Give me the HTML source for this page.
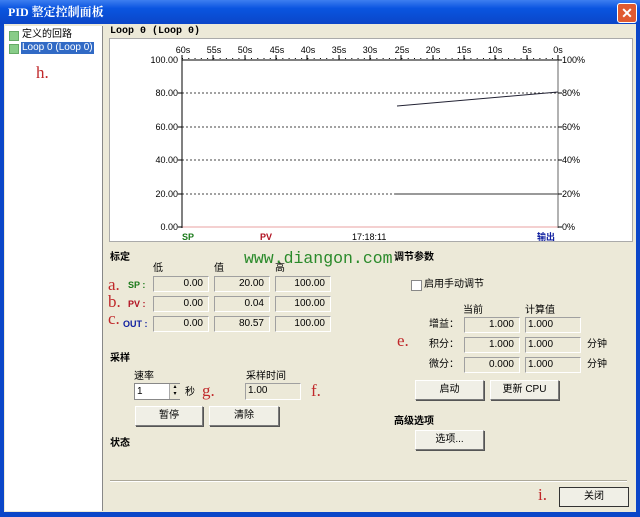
<!DOCTYPE html><html><head><meta charset="utf-8"><style>
body{margin:0;width:640px;height:517px;overflow:hidden;background:#ece9d8;font-family:"Liberation Sans","Noto Sans CJK SC",sans-serif;font-size:11px;position:relative}
.a{position:absolute;line-height:12px}
.title{left:0;top:0;width:640px;height:24px;background:linear-gradient(#3d7ff0,#0a55e0 35%,#0b46c8);}
.tb{border:1px solid #a0a0a0;border-right-color:#fff;border-bottom-color:#fff;background:#ece9d8;height:16px;box-sizing:border-box;text-align:right;padding-right:5px;line-height:14px;font-size:10px}
.btn{border:1px solid #7a7a7a;border-top-color:#fff;border-left-color:#fff;box-shadow:1px 1px 0 #555;background:#f0efe6;height:20px;box-sizing:border-box;text-align:center;line-height:18px;font-size:10px}
.red{color:#c0282a;font-family:"Liberation Serif",serif;font-size:17px;line-height:18px}
.b{font-weight:bold}
</style></head><body>
<div class="a title"></div>
<div class="a" style="left:8px;top:6px;color:#fff;font-weight:bold;font-size:12px;font-family:'Liberation Serif','Noto Serif CJK SC',serif">PID 整定控制面板</div>
<div class="a" style="left:617px;top:3px;width:18px;height:18px;background:#e05a30;border:1px solid #fff;border-radius:3px;color:#fff;text-align:center;line-height:18px;font-weight:bold;font-size:14px">✕</div>
<div class="a" style="left:0;top:24px;width:4px;height:493px;background:#0b46c8"></div>
<div class="a" style="left:636px;top:24px;width:4px;height:493px;background:#0b46c8"></div>
<div class="a" style="left:0;top:512px;width:640px;height:5px;background:#0b46c8"></div>
<div class="a" style="left:5px;top:26px;width:97px;height:485px;background:#fff;border-right:1px solid #888"></div>
<div class="a" style="left:9px;top:31px;width:8px;height:8px;background:#8c8;border:1px solid #6a6"></div>
<div class="a" style="left:22px;top:29px;font-size:10px">定义的回路</div>
<div class="a" style="left:9px;top:44px;width:8px;height:8px;background:#8c8;border:1px solid #6a6"></div>
<div class="a" style="left:21px;top:42px;font-size:10px;background:#316ac5;color:#fff;padding:0 1px">Loop 0 (Loop 0)</div>
<div class="a red" style="left:36px;top:64px">h.</div>
<div class="a b" style="left:110px;top:26px;font-size:10px;font-family:'Liberation Mono',monospace">Loop 0 (Loop 0)</div>
<div class="a" style="left:109px;top:38px;width:524px;height:204px;background:#fff;border:1px solid #aaa;box-sizing:border-box"></div>
<svg class="a" style="left:0;top:0" width="640" height="250" font-family="Liberation Sans" font-size="9">
<g stroke="#444" stroke-dasharray="2,2"><line x1="182" y1="93" x2="558" y2="93"/><line x1="182" y1="127" x2="558" y2="127"/><line x1="182" y1="160" x2="558" y2="160"/><line x1="182" y1="194" x2="558" y2="194"/></g>
<line x1="395" y1="194" x2="558" y2="194" stroke="#333"/>
<line x1="182" y1="227" x2="558" y2="227" stroke="#e8a0a0"/>
<line x1="182" y1="60" x2="558" y2="60" stroke="#000"/>
<line x1="182" y1="60" x2="182" y2="228" stroke="#000"/>
<line x1="558" y1="60" x2="558" y2="228" stroke="#666"/>
<line x1="397" y1="106" x2="558" y2="92" stroke="#223" />
<g text-anchor="end" fill="#000"><text x="178" y="63">100.00</text><text x="178" y="96">80.00</text><text x="178" y="130">60.00</text><text x="178" y="163">40.00</text><text x="178" y="197">20.00</text><text x="178" y="230">0.00</text></g>
<g fill="#000"><text x="562" y="63">100%</text><text x="562" y="96">80%</text><text x="562" y="130">60%</text><text x="562" y="163">40%</text><text x="562" y="197">20%</text><text x="562" y="230">0%</text></g>
<g text-anchor="middle" fill="#000"><text x="183" y="53">60s</text><text x="214" y="53">55s</text><text x="245" y="53">50s</text><text x="277" y="53">45s</text><text x="308" y="53">40s</text><text x="339" y="53">35s</text><text x="370" y="53">30s</text><text x="402" y="53">25s</text><text x="433" y="53">20s</text><text x="464" y="53">15s</text><text x="495" y="53">10s</text><text x="527" y="53">5s</text><text x="558" y="53">0s</text></g>
<path stroke="#000" fill="none" d="M182 55v5M213 55v5M245 55v5M276 55v5M307 55v5M339 55v5M370 55v5M401 55v5M433 55v5M464 55v5M495 55v5M527 55v5M558 55v5"/>
<path stroke="#000" fill="none" stroke-dasharray="1,5.27" d="M182 58.5H558"/>
<path stroke="#000" d="M178 93h4M178 127h4M178 160h4M178 194h4M178 227h4M558 60h4M558 93h4M558 127h4M558 160h4M558 194h4M558 227h4"/>
<text x="182" y="240" fill="#1a7a1a" font-weight="bold">SP</text>
<text x="260" y="240" fill="#b01020" font-weight="bold">PV</text>
<text x="352" y="240" fill="#000">17:18:11</text>
<text x="537" y="240" fill="#1020a0" font-weight="bold" font-family="Noto Sans CJK SC">输出</text>
</svg>
<div class="a b" style="left:110px;top:252px;font-size:10px">标定</div>
<div class="a" style="left:244px;top:250px;color:#2a8a2a;font-family:'Liberation Mono',monospace;font-size:16.5px;line-height:18px">www.diangon.com</div>
<div class="a" style="left:153px;top:263px;font-size:10px">低</div>
<div class="a" style="left:214px;top:263px;font-size:10px">值</div>
<div class="a" style="left:275px;top:263px;font-size:10px">高</div>
<div class="a red" style="left:108px;top:276px">a.</div><div class="a b" style="left:128px;top:279px;color:#1a7a1a;font-size:9px">SP :</div>
<div class="a red" style="left:108px;top:293px">b.</div><div class="a b" style="left:128px;top:298px;color:#b01020;font-size:9px">PV :</div>
<div class="a red" style="left:108px;top:310px">c.</div><div class="a b" style="left:123px;top:318px;color:#1020a0;font-size:9px">OUT :</div>
<div class="a tb" style="left:153px;top:276px;width:56px">0.00</div><div class="a tb" style="left:214px;top:276px;width:56px">20.00</div><div class="a tb" style="left:275px;top:276px;width:56px">100.00</div>
<div class="a tb" style="left:153px;top:296px;width:56px">0.00</div><div class="a tb" style="left:214px;top:296px;width:56px">0.04</div><div class="a tb" style="left:275px;top:296px;width:56px">100.00</div>
<div class="a tb" style="left:153px;top:316px;width:56px">0.00</div><div class="a tb" style="left:214px;top:316px;width:56px">80.57</div><div class="a tb" style="left:275px;top:316px;width:56px">100.00</div>
<div class="a b" style="left:110px;top:353px;font-size:10px">采样</div>
<div class="a" style="left:134px;top:371px;font-size:10px">速率</div>
<div class="a" style="left:246px;top:371px;font-size:10px">采样时间</div>
<div class="a" style="left:134px;top:383px;width:46px;height:17px;background:#fff;border:1px solid #888;font-size:10px;line-height:15px;padding-left:2px;box-sizing:border-box">1</div>
<div class="a" style="left:169px;top:384px;width:10px;height:15px;background:#ece9d8;border-left:1px solid #aaa;font-size:6px;text-align:center;line-height:7px">▴<br>▾</div>
<div class="a" style="left:185px;top:387px;font-size:10px">秒</div>
<div class="a red" style="left:202px;top:382px">g.</div>
<div class="a tb" style="left:245px;top:383px;width:56px;height:17px;text-align:left;padding-left:2px">1.00</div>
<div class="a red" style="left:311px;top:382px">f.</div>
<div class="a btn" style="left:135px;top:406px;width:68px;line-height:18px">暂停</div>
<div class="a btn" style="left:209px;top:406px;width:70px;line-height:18px">清除</div>
<div class="a b" style="left:110px;top:438px;font-size:10px">状态</div>
<div class="a" style="left:110px;top:480px;width:517px;height:1px;background:#aca899;border-bottom:1px solid #fff"></div>
<div class="a b" style="left:394px;top:252px;font-size:10px">调节参数</div>
<div class="a" style="left:411px;top:280px;width:9px;height:9px;background:#fff;border:1px solid #888"></div>
<div class="a" style="left:424px;top:279px;font-size:10px">启用手动调节</div>
<div class="a" style="left:463px;top:305px;font-size:10px">当前</div>
<div class="a" style="left:525px;top:305px;font-size:10px">计算值</div>
<div class="a" style="left:429px;top:319px;font-size:10px">增益：</div>
<div class="a" style="left:429px;top:339px;font-size:10px">积分：</div>
<div class="a" style="left:429px;top:359px;font-size:10px">微分：</div>
<div class="a red" style="left:397px;top:332px">e.</div>
<div class="a tb" style="left:464px;top:317px;width:56px;line-height:14px">1.000</div><div class="a tb" style="left:525px;top:317px;width:56px;text-align:left;padding-left:2px;line-height:14px">1.000</div>
<div class="a tb" style="left:464px;top:337px;width:56px;line-height:14px">1.000</div><div class="a tb" style="left:525px;top:337px;width:56px;text-align:left;padding-left:2px;line-height:14px">1.000</div>
<div class="a tb" style="left:464px;top:357px;width:56px;line-height:14px">0.000</div><div class="a tb" style="left:525px;top:357px;width:56px;text-align:left;padding-left:2px;line-height:14px">1.000</div>
<div class="a" style="left:587px;top:339px;font-size:10px">分钟</div>
<div class="a" style="left:587px;top:359px;font-size:10px">分钟</div>
<div class="a btn" style="left:415px;top:380px;width:69px;line-height:18px">启动</div>
<div class="a btn" style="left:490px;top:380px;width:69px;line-height:18px">更新 CPU</div>
<div class="a b" style="left:394px;top:416px;font-size:10px">高级选项</div>
<div class="a btn" style="left:415px;top:430px;width:69px;line-height:18px">选项...</div>
<div class="a red" style="left:538px;top:486px">i.</div>
<div class="a btn" style="left:559px;top:487px;width:70px;border:1px solid #333;box-shadow:none;line-height:18px">关闭</div>
</body></html>
